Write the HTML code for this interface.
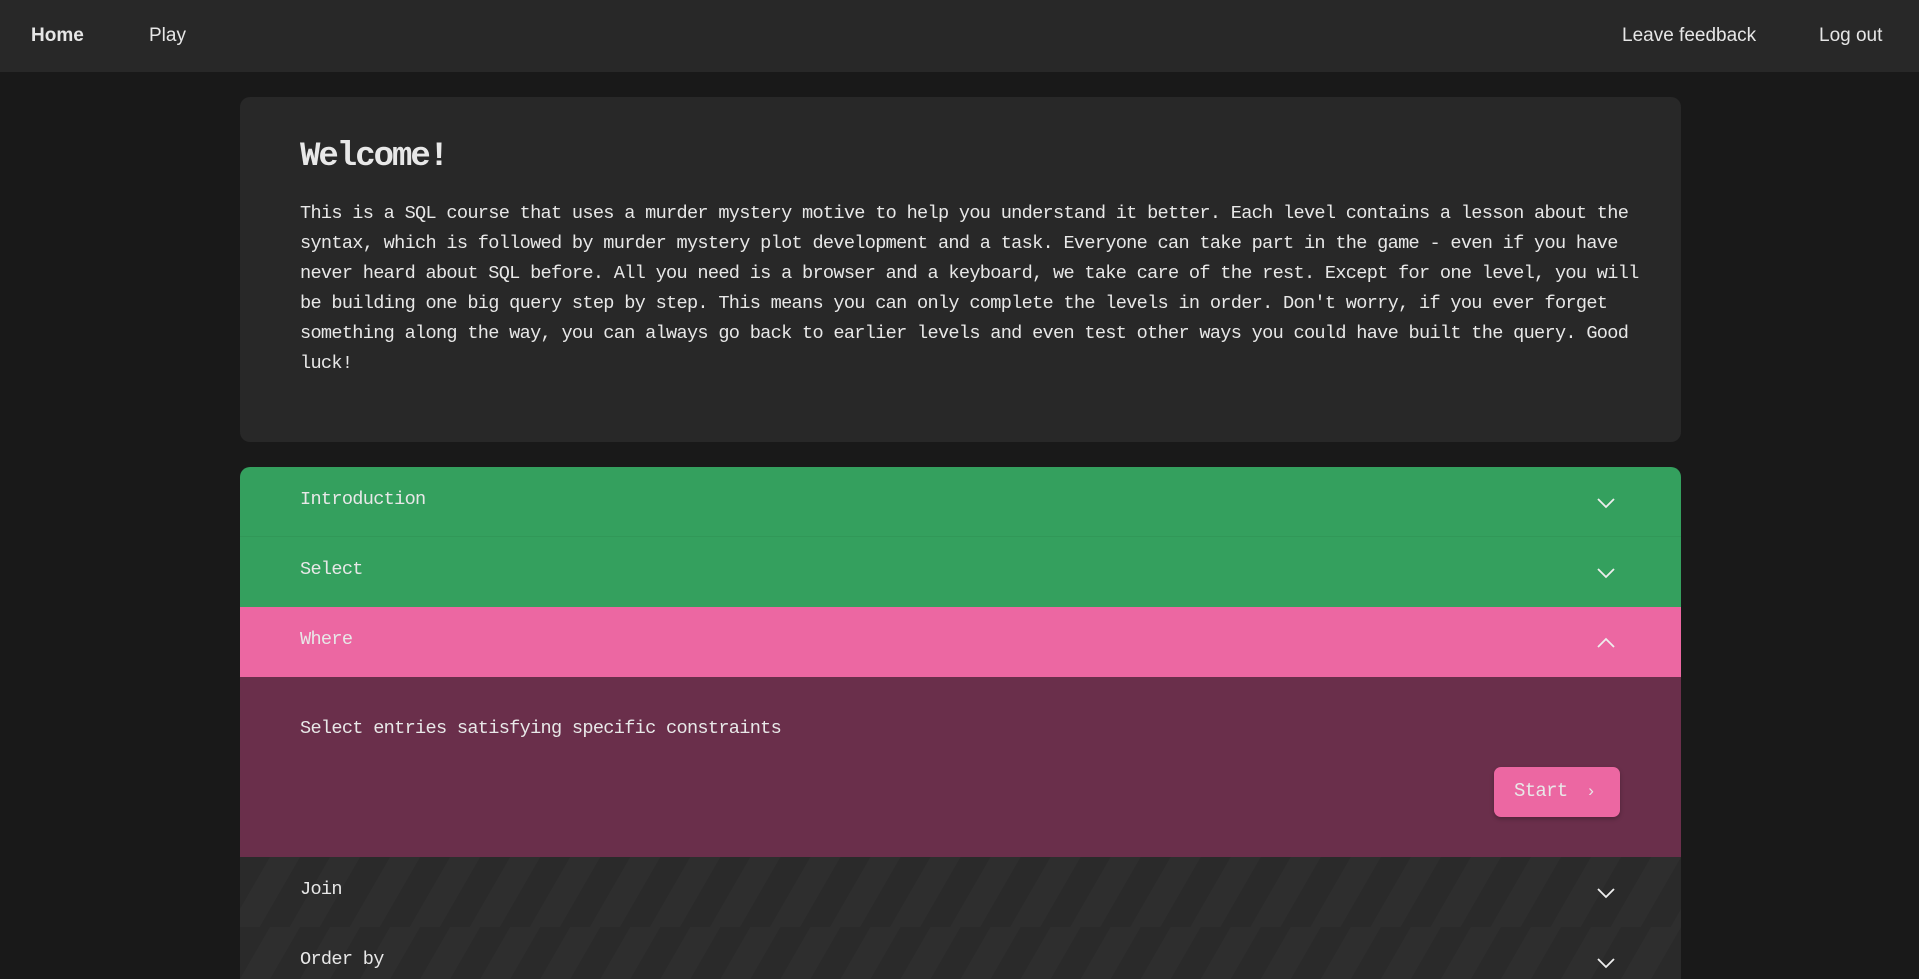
<!DOCTYPE html>
<html><head><meta charset="utf-8"><style>
*{box-sizing:border-box;margin:0;padding:0}
body{width:1919px;height:979px;overflow:hidden;background:#191919;color:#e8e8e8;font-family:"Liberation Mono",monospace;position:relative;letter-spacing:-0.7px}
nav{position:absolute;left:0;top:0;width:1919px;height:72px;background:#282828;font-family:"Liberation Sans",sans-serif;font-size:19px;color:#e6e6e6;letter-spacing:0}
nav span{position:absolute;top:25px}
.card{position:absolute;left:240px;top:97px;width:1441px;height:345px;background:#282828;border-radius:10px;padding:40px 60px}
h1{font-size:34px;font-weight:bold;letter-spacing:-2px;line-height:40px;margin-bottom:22px}
.card p{font-size:18.6px;line-height:30px;white-space:nowrap}
.acc{position:absolute;left:240px;top:467px;width:1441px;height:512px;border-radius:10px 10px 0 0;overflow:hidden}
.row{height:70px;position:relative;font-size:18.6px;padding-left:60px;line-height:66px}
.row svg{position:absolute;left:1596px;left:1356px;top:30px}
.g{background:#34a05e}
.p{background:#ec67a2}
.d{background:repeating-linear-gradient(120deg,#2a2a2a 0 26px,#2e2e2e 26px 52px)}
.content{height:180px;background:#6a2f4b;position:relative;padding-left:60px;font-size:18.6px}
.btn{position:absolute;left:1254px;top:90px;width:126px;height:50px;background:#ec67a2;border-radius:7px;box-shadow:0 2px 4px rgba(0,0,0,.25);font-size:19px;line-height:48px;padding-left:20px}
</style></head><body>
<nav><span style="left:31px;font-weight:bold">Home</span><span style="left:149px">Play</span><span style="left:1622px">Leave feedback</span><span style="left:1819px">Log out</span></nav>
<div class="card"><h1>Welcome!</h1>
<p>This is a SQL course that uses a murder mystery motive to help you understand it better. Each level contains a lesson about the<br>syntax, which is followed by murder mystery plot development and a task. Everyone can take part in the game - even if you have<br>never heard about SQL before. All you need is a browser and a keyboard, we take care of the rest. Except for one level, you will<br>be building one big query step by step. This means you can only complete the levels in order. Don't worry, if you ever forget<br>something along the way, you can always go back to earlier levels and even test other ways you could have built the query. Good<br>luck!</p></div>
<div class="acc">
<div class="row g" style="border-bottom:1px solid #319858">Introduction<svg width="20" height="12"><path d="M2 2l8 8 8-8" stroke="#eee" stroke-width="1.8" fill="none"/></svg></div>
<div class="row g">Select<svg width="20" height="12"><path d="M2 2l8 8 8-8" stroke="#eee" stroke-width="1.8" fill="none"/></svg></div>
<div class="row p">Where<svg width="20" height="12"><path d="M2 10l8-8 8 8" stroke="#eee" stroke-width="1.8" fill="none"/></svg></div>
<div class="content"><div style="position:absolute;left:60px;top:41px">Select entries satisfying specific constraints</div><div class="btn">Start <span style="font-family:'Liberation Sans';font-size:17px;margin-left:10px">&#8250;</span></div></div>
<div class="row d">Join<svg width="20" height="12"><path d="M2 2l8 8 8-8" stroke="#eee" stroke-width="1.8" fill="none"/></svg></div>
<div class="row d">Order by<svg width="20" height="12"><path d="M2 2l8 8 8-8" stroke="#eee" stroke-width="1.8" fill="none"/></svg></div>
</div>
</body></html>
